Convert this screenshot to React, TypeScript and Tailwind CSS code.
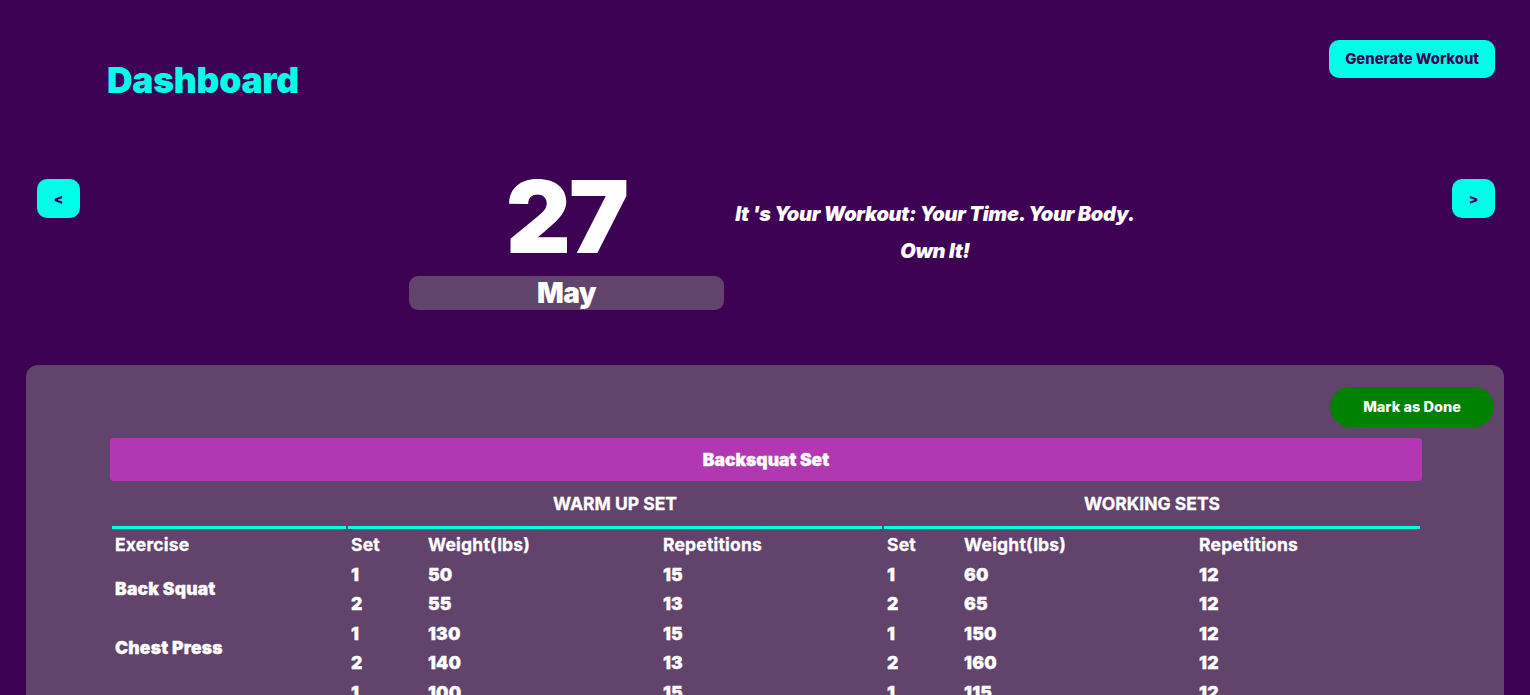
import React from "react";

type SetRow = { set: number; weight: number; reps: number };
type Exercise = { name: string; warmup: SetRow[]; working: SetRow[] };

const EXERCISES: Exercise[] = [
  {
    name: "Back Squat",
    warmup: [
      { set: 1, weight: 50, reps: 15 },
      { set: 2, weight: 55, reps: 13 },
    ],
    working: [
      { set: 1, weight: 60, reps: 12 },
      { set: 2, weight: 65, reps: 12 },
    ],
  },
  {
    name: "Chest Press",
    warmup: [
      { set: 1, weight: 130, reps: 15 },
      { set: 2, weight: 140, reps: 13 },
    ],
    working: [
      { set: 1, weight: 150, reps: 12 },
      { set: 2, weight: 160, reps: 12 },
    ],
  },
  {
    name: "Shoulder Press",
    warmup: [
      { set: 1, weight: 100, reps: 15 },
      { set: 2, weight: 110, reps: 13 },
    ],
    working: [
      { set: 1, weight: 115, reps: 12 },
      { set: 2, weight: 125, reps: 12 },
    ],
  },
];

function NavButton({ label }: { label: string }) {
  return (
    <button
      type="button"
      className="w-[43px] h-[39px] rounded-[10px] bg-[#00ffe9] text-[#3e0255] text-[14px] font-black"
    >
      {label}
    </button>
  );
}

export default function App() {
  const cell = "px-[3px] h-[29.5px] align-middle text-left tracking-[0.2px]";

  return (
    <div
      className="min-h-screen bg-[#3e0255] text-white"
      style={{ fontFamily: "Inter, 'Noto Sans', sans-serif" }}
    >
      {/* header */}
      <div className="flex items-start justify-between pl-[107px] pr-[35px] pt-[40px]">
        <h1 className="mt-[19px] text-[35.5px] leading-[44px] font-black text-[#00ffe9] tracking-[-0.3px]">
          Dashboard
        </h1>
        <button
          type="button"
          className="h-[38px] px-[16px] rounded-[10px] bg-[#00ffe9] text-[#3e0255] text-[14.8px] font-extrabold"
        >
          Generate Workout
        </button>
      </div>

      {/* date row */}
      <div className="flex items-start justify-between px-[35px] pt-[61px]">
        <div className="pt-[15px] pl-[2px]">
          <NavButton label="<" />
        </div>
        <div className="flex items-start ml-[329px]">
          <div className="w-[315px] flex flex-col items-center">
            <div className="text-[101px] leading-[104px] font-black tracking-[-2px]">
              27
            </div>
            <div className="w-full h-[34px] mt-[8px] rounded-[9px] bg-[#61436b] flex items-center justify-center text-[28px] font-black tracking-[-0.5px]">
              May
            </div>
          </div>
          <div className="w-[420px] ml-[1px] pt-[32px] text-center text-[20px] leading-[37px] italic font-black tracking-[-0.3px]">
            <p>It 's Your Workout: Your Time. Your Body.</p>
            <p>Own It!</p>
          </div>
        </div>
        <div className="flex-1" />
        <div className="pt-[15px]">
          <NavButton label=">" />
        </div>
      </div>

      {/* workout card */}
      <div className="mx-[26px] mt-[55px] bg-[#61436b] rounded-t-[12px] pb-8 pt-[22px] pl-[84px] pr-[10px]">
        <div className="flex justify-end">
          <button
            type="button"
            className="w-[164px] h-[40px] rounded-full bg-[#008000] text-white text-[14.5px] font-extrabold"
          >
            Mark as Done
          </button>
        </div>
        <div className="w-[1312px] mt-[11px]">
          <div className="h-[43px] rounded-[4px] bg-[#b237b2] flex items-center justify-center pt-[1px] text-[17.5px] font-black [-webkit-text-stroke:0.3px_white]">
            Backsquat Set
          </div>
          <table className="w-[1312px] table-fixed border-separate border-spacing-x-[2px] border-spacing-y-0 text-[17.5px] font-black [-webkit-text-stroke:0.3px_white]">
            <colgroup>
              <col className="w-[234px]" />
              <col className="w-[75px]" />
              <col className="w-[233px]" />
              <col className="w-[222px]" />
              <col className="w-[75px]" />
              <col className="w-[233px]" />
              <col className="w-[224px]" />
            </colgroup>
            <thead>
              <tr>
                <th className="h-[48px] pt-[2px] border-b-[3px] border-[#00ffe9]" />
                <th
                  colSpan={3}
                  className="h-[48px] pt-[2px] text-center border-b-[3px] border-[#00ffe9]"
                >
                  WARM UP SET
                </th>
                <th
                  colSpan={3}
                  className="h-[48px] pt-[2px] text-center border-b-[3px] border-[#00ffe9]"
                >
                  WORKING SETS
                </th>
              </tr>
              <tr>
                <th className={`${cell} h-[31px] pt-[1px]`}>Exercise</th>
                <th className={`${cell} h-[31px] pt-[1px]`}>Set</th>
                <th className={`${cell} h-[31px] pt-[1px]`}>Weight(lbs)</th>
                <th className={`${cell} h-[31px] pt-[1px]`}>Repetitions</th>
                <th className={`${cell} h-[31px] pt-[1px]`}>Set</th>
                <th className={`${cell} h-[31px] pt-[1px]`}>Weight(lbs)</th>
                <th className={`${cell} h-[31px] pt-[1px]`}>Repetitions</th>
              </tr>
            </thead>
            <tbody>
              {EXERCISES.map((ex) =>
                ex.warmup.map((w, i) => {
                  const k = ex.working[i];
                  return (
                    <tr key={`${ex.name}-${i}`}>
                      {i === 0 && (
                        <td rowSpan={ex.warmup.length} className={cell}>
                          {ex.name}
                        </td>
                      )}
                      <td className={cell}>{w.set}</td>
                      <td className={cell}>{w.weight}</td>
                      <td className={cell}>{w.reps}</td>
                      <td className={cell}>{k.set}</td>
                      <td className={cell}>{k.weight}</td>
                      <td className={cell}>{k.reps}</td>
                    </tr>
                  );
                })
              )}
            </tbody>
          </table>
        </div>
      </div>
    </div>
  );
}
